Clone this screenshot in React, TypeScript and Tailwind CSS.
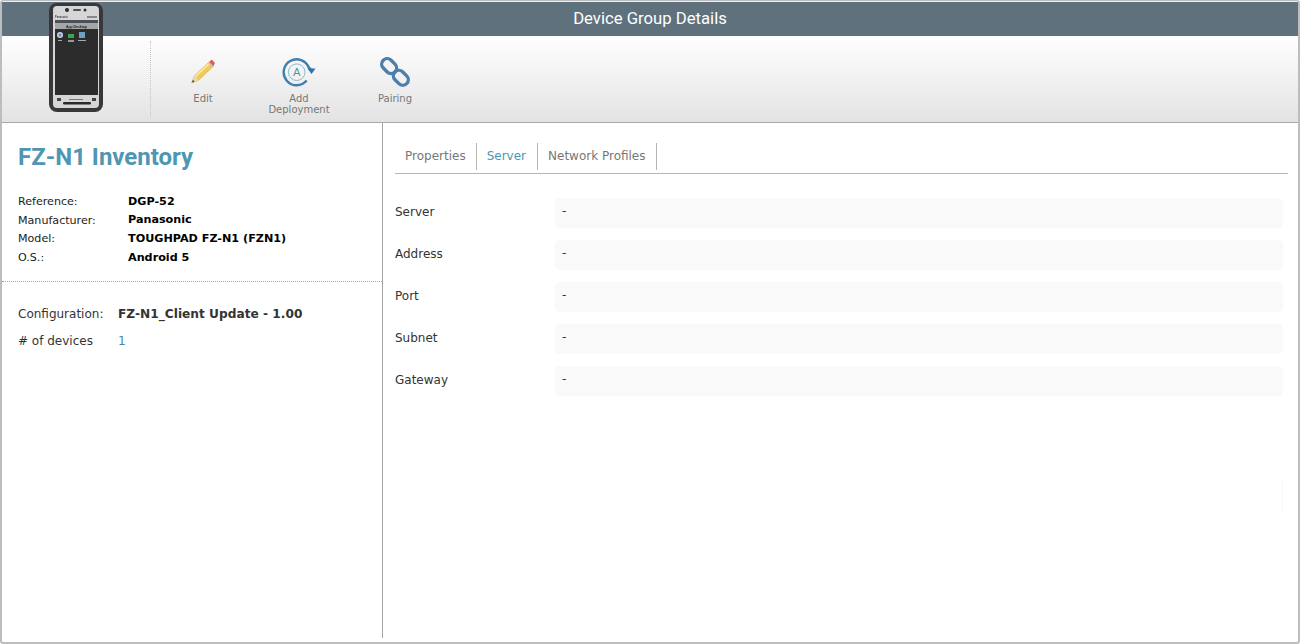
const bodyFont = "font-['DejaVu_Sans','Liberation_Sans',sans-serif]"

const details = [
    { label: 'Reference:', value: 'DGP-52' },
    { label: 'Manufacturer:', value: 'Panasonic' },
    { label: 'Model:', value: 'TOUGHPAD FZ-N1 (FZN1)' },
    { label: 'O.S.:', value: 'Android 5' },
]

const serverRows = ['Server', 'Address', 'Port', 'Subnet', 'Gateway']

const PhoneImage = () => (
    <svg width="56" height="112" viewBox="0 0 56 112" className="blur-[0.4px]">
        <rect x="0" y="1" width="54" height="109" rx="8" fill="#38383a" />
        <rect x="4" y="4" width="46" height="102" rx="4" fill="#d6d6d6" />
        <circle cx="18" cy="8" r="2" fill="#2b2b2b" />
        <rect x="24" y="7" width="8" height="2" rx="1" fill="#555" />
        <circle cx="36" cy="8" r="1.5" fill="#333" />
        <text x="6" y="16" fontSize="2.6" fontWeight="700" fill="#444" fontFamily="Liberation Sans">Panasonic</text>
        <rect x="38" y="14" width="10" height="2" fill="#888" />
        <rect x="6" y="18" width="43" height="75" fill="#2c2c2c" />
        <rect x="6" y="18" width="43" height="3" fill="#4a5058" />
        <rect x="6" y="21" width="43" height="6" fill="#a6a6a6" />
        <text x="27.5" y="25.5" fontSize="3.4" fontWeight="700" textAnchor="middle" fill="#222" fontFamily="Liberation Sans">App Desktop</text>
        <circle cx="11" cy="33" r="3" fill="#c7d3ea" />
        <circle cx="11" cy="33" r="1.5" fill="#6d86b8" />
        <rect x="19" y="32" width="6" height="4" fill="#3aa84a" />
        <rect x="30" y="30" width="6" height="6" fill="#6da2c4" />
        <rect x="9" y="38" width="4" height="1" fill="#aaa" />
        <rect x="19" y="38" width="6" height="2" fill="#999" />
        <rect x="29" y="38" width="8" height="1" fill="#aaa" />
        <rect x="8" y="96" width="4" height="3" fill="#444" />
        <rect x="43" y="96" width="4" height="3" fill="#444" />
        <rect x="20" y="97" width="14" height="1" fill="#777" />
        <rect x="14" y="100" width="28" height="2.5" rx="1.2" fill="#2b2b2b" />
    </svg>
)

const PencilIcon = () => (
    <svg width="26" height="27" viewBox="0 0 30 30">
        <path d="M2 28 L5 20 L22 4 L27 9 L10 25 Z" fill="#f0c95a" stroke="#d2a53c" strokeWidth="0.6" />
        <path d="M6 21 L23 5" stroke="#fbe8a5" strokeWidth="2" />
        <path d="M22 4 L24 2 Q25 1 26 2 L28.5 4.8 Q29 6 28 7 L27 9 Z" fill="#d8635a" />
        <path d="M21.5 4.5 L26.5 9.5" stroke="#bdbdbd" strokeWidth="1.6" />
        <path d="M5 20 L10 25 L2 28 Z" fill="#ecd9b0" />
        <path d="M3.3 24.5 L5.5 26.7 L2 28 Z" fill="#555" />
    </svg>
)

const DeployIcon = () => (
    <svg width="34" height="32" viewBox="0 0 34 32">
        <path d="M24.7 24.6 A13 13 0 1 1 26.9 11.8 L29 13" fill="none" stroke="#3f7fae" strokeWidth="2.4" />
        <path d="M25.5 12.5 L33.5 12.5 L29.5 18 Z" fill="#2f72a6" />
        <circle cx="14.7" cy="16.2" r="8.3" fill="none" stroke="#7db3c9" strokeWidth="0.9" />
        <text x="14.7" y="20.2" fontSize="11" textAnchor="middle" fill="#4e95a8" fontFamily="DejaVu Sans">A</text>
    </svg>
)

const LinkIcon = () => (
    <svg width="30" height="30" viewBox="0 0 30 30">
        <g fill="none" stroke="#4c7fae" strokeWidth="3.4">
            <rect x="0.9" y="3.6" width="16.5" height="11" rx="5.5" transform="rotate(45 9.15 9.1)" />
            <rect x="12.6" y="15.3" width="16.5" height="11" rx="5.5" transform="rotate(45 20.85 20.8)" />
        </g>
    </svg>
)

const toolbarItems = [
    { label: 'Edit', icon: <PencilIcon />, width: 'w-[106px]' },
    { label: 'Add Deployment', icon: <DeployIcon />, width: 'w-[86px]' },
    { label: 'Pairing', icon: <LinkIcon />, width: 'w-[106px]' },
]

const App = () => {
    return (
        <div className={`w-[1300px] h-[644px] bg-white ${bodyFont}`}>
            <div className="relative w-full h-full flex flex-col border-2 border-t border-[#bdbdbd] rounded-[3px] overflow-hidden">
                <div className="h-[35px] shrink-0 bg-[#5f717c] flex items-center justify-center border-t border-[#eee] text-white text-[16.7px] font-['Roboto',sans-serif]">
                    Device Group Details
                </div>

                <div className="absolute left-[47px] top-[1px]">
                    <PhoneImage />
                </div>

                <div className="absolute right-[15px] top-[477px] w-px h-[35px] bg-[#f6f6f6]" />

                <div className="h-[87px] shrink-0 flex bg-gradient-to-b from-white to-[#e3e3e3] border-b border-[#a9a9a9]">
                    <div className="w-[149px] my-[5px] border-r border-dotted border-[#c4c4c4]" />
                    <div className="flex -ml-px">
                        {toolbarItems.map((item) => (
                            <div key={item.label} className={`${item.width} flex flex-col items-center pt-[19px] text-[10px] leading-[11px] text-[#777] text-center`}>
                                <div className="h-[33px] flex items-center justify-center">{item.icon}</div>
                                <div className="mt-[5px] px-5">{item.label}</div>
                            </div>
                        ))}
                    </div>
                </div>

                <div className="flex-1 flex min-h-0 pb-[4px]">
                    <div className="w-[381px] shrink-0 border-r border-[#a3a3a3]">
                        <div className="h-[159px] border-b border-dotted border-[#a8a8a8] pl-4 pt-[19px]">
                            <h1 className="text-2xl leading-[30px] font-bold text-[#4f96b2] font-['Roboto',sans-serif]">FZ-N1 Inventory</h1>
                            <div className="mt-[21px] flex flex-col">
                                {details.map((row) => (
                                    <div key={row.label} className="flex h-[18.6px] items-center text-[11.1px] text-[#222]">
                                        <span className="w-[110px]">{row.label}</span>
                                        <b className="text-black text-[11.2px]">{row.value}</b>
                                    </div>
                                ))}
                            </div>
                        </div>
                        <div className="pl-4 pt-[24px] text-xs text-[#333]">
                            <div className="flex h-4 items-center">
                                <span className="w-[100px]">Configuration:</span>
                                <b className="text-[12.2px]">FZ-N1_Client Update - 1.00</b>
                            </div>
                            <div className="flex h-4 items-center mt-[11px]">
                                <span className="w-[100px]"># of devices</span>
                                <span className="text-[#4b86ad]">1</span>
                            </div>
                        </div>
                    </div>

                    <div className="flex-1 pl-3 pr-2.5 pt-[8px]">
                        <div className="flex h-[43px] border-b border-[#b5b5b5] pt-[12px] text-xs text-[#777]">
                            <div className="h-[27px] flex items-center pl-2.5 pr-2.5 pb-0.5 border-r border-[#b5b5b5]">Properties</div>
                            <div className="h-[27px] flex items-center pl-2.5 pr-[11px] pb-0.5 border-r border-[#b5b5b5] text-[#4f96b2]">Server</div>
                            <div className="h-[27px] flex items-center px-2.5 pb-0.5 border-r border-[#b5b5b5]">Network Profiles</div>
                        </div>
                        <div className="mt-6 flex flex-col gap-3 pr-[5px]">
                            {serverRows.map((row) => (
                                <div key={row} className="flex items-center h-[30px] text-xs text-[#333]">
                                    <span className="w-[160px] shrink-0 pb-0.5">{row}</span>
                                    <div className="flex-1 h-full flex items-center bg-[#f9f9f9] rounded-[5px] pl-[7px] pb-1">-</div>
                                </div>
                            ))}
                        </div>
                    </div>
                </div>
            </div>
        </div>
    )
}

export default App
